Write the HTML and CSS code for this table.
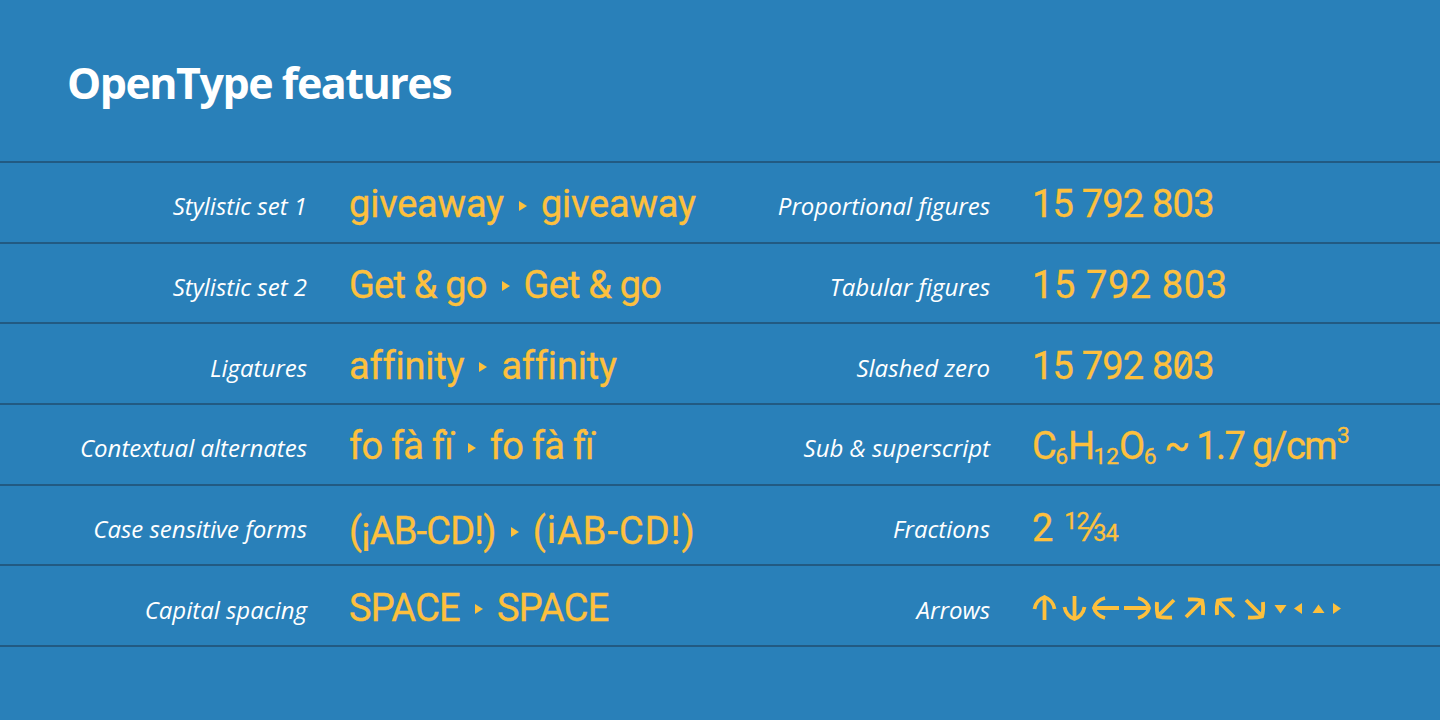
FILE: index.html
```html
<!DOCTYPE html>
<html lang="en">
<head>
<meta charset="utf-8">
<title>OpenType features</title>
<link rel="stylesheet" href="styles.css">
</head>
<body>
<main class="page">
  <header class="header">
    <h1 class="title">OpenType features</h1>
  </header>
  <section class="table">
    <div class="row">
      <div class="label">Stylistic set 1</div>
      <div class="sample"><span class="wide">giveaway</span><span class="tri"></span><span class="wide">giveaway</span></div>
      <div class="label">Proportional figures</div>
      <div class="sample">15 792 803</div>
    </div>
    <div class="row">
      <div class="label">Stylistic set 2</div>
      <div class="sample">Get &amp; go<span class="tri"></span>Get &amp; go</div>
      <div class="label">Tabular figures</div>
      <div class="sample tabular">15 792 803</div>
    </div>
    <div class="row">
      <div class="label">Ligatures</div>
      <div class="sample"><span class="noliga wide">affinity</span><span class="tri"></span><span class="wide">affinity</span></div>
      <div class="label">Slashed zero</div>
      <div class="sample">15 792 8<span class="zero">0</span>3</div>
    </div>
    <div class="row">
      <div class="label">Contextual alternates</div>
      <div class="sample">fo fà fï<span class="tri"></span>fo fà fï</div>
      <div class="label">Sub &amp; superscript</div>
      <div class="sample subsup">C<span class="sub">6</span>H<span class="sub">12</span>O<span class="sub">6</span> ~ 1.7 g/cm<span class="sup">3</span></div>
    </div>
    <div class="row">
      <div class="label">Case sensitive forms</div>
      <div class="sample">(¡AB-CD!)<span class="tri"></span><span class="casegrp">(<span class="case">¡</span>AB-CD!)</span></div>
      <div class="label">Fractions</div>
      <div class="sample">2 <span class="num">12</span><span class="fslash">⁄</span><span class="den">34</span></div>
    </div>
    <div class="row">
      <div class="label">Capital spacing</div>
      <div class="sample">SPACE<span class="tri"></span><span class="cpsp">SPACE</span></div>
      <div class="label">Arrows</div>
      <div class="sample arrows">
        <svg class="arr a-v" viewBox="0 0 25 26"><path d="M12.5 2V25M2.5 14C3.5 8 8 3.5 12.5 2C17 3.5 21.5 8 22.5 14"/></svg>
        <svg class="arr a-v" viewBox="0 0 25 26"><path d="M12.5 1V24M2.5 12C3.5 18 8 22.5 12.5 24C17 22.5 21.5 18 22.5 12"/></svg>
        <svg class="arr a-h" viewBox="0 0 28 26"><path d="M2 13H27M13 3C7 4.5 3 9 2 13C3 17 7 21.5 13 23"/></svg>
        <svg class="arr a-h" viewBox="0 0 28 26"><path d="M1 13H26M15 3C21 4.5 25 9 26 13C25 17 21 21.5 15 23"/></svg>
        <svg class="arr a-d" viewBox="0 0 22 26"><path d="M20 5L4 21M3 7C2.5 13 3 18 4 21.5C7.5 22.5 12 23 18 22.5"/></svg>
        <svg class="arr a-d" viewBox="0 0 22 26"><path d="M2 22L18 6M4 4.5C10 4 14.5 4.5 18 5.5C19 9 19.5 14 19 20"/></svg>
        <svg class="arr a-d" viewBox="0 0 22 26"><path d="M20 22L4 6M3 20C2.5 14 3 9 4 5.5C7.5 4.5 12 4 18 4.5"/></svg>
        <svg class="arr a-d" viewBox="0 0 22 26"><path d="M2 5L18 21M19 7C19.5 13 19 18 18 21.5C14.5 22.5 10 23 4 22.5"/></svg>
        <svg class="tri-ico t-down" viewBox="0 0 13 26"><polygon class="fill" points="0.5,10 12.5,10 6.5,18.5"/></svg>
        <svg class="tri-ico t-left" viewBox="0 0 10 26"><polygon class="fill" points="9,8 9,19 1,13.5"/></svg>
        <svg class="tri-ico t-up" viewBox="0 0 13 26"><polygon class="fill" points="0.5,18 12.5,18 6.5,9.5"/></svg>
        <svg class="tri-ico t-right" viewBox="0 0 10 26"><polygon class="fill" points="1,8 1,19 9,13.5"/></svg>
      </div>
    </div>
  </section>
</main>
</body>
</html>
```
FILE: styles.css
```css
* { box-sizing: border-box; }

html, body {
  margin: 0;
  padding: 0;
  background: #2980b9;
}

.page {
  width: 1440px;
  height: 720px;
  background: #2980b9;
  font-family: "Open Sans", "Noto Sans", sans-serif;
  overflow: hidden;
}

.header {
  height: 161px;
  padding: 54px 0 0 67px;
}

.title {
  margin: 0;
  font-size: 43px;
  font-weight: 700;
  color: #ffffff;
  line-height: 1.362;
  letter-spacing: -1.5px;
}

.row {
  display: grid;
  grid-template-columns: 307px 383px 300px 1fr;
  align-items: center;
  height: 80.7px;
  border-top: 2px solid #225a82;
  padding-top: 4px;
}

.row:last-child {
  border-bottom: 2px solid #225a82;
  height: 82.7px;
}

.label {
  text-align: right;
  color: #ffffff;
  font-style: italic;
  font-size: 24px;
  line-height: 30px;
  padding-top: 4px;
  white-space: nowrap;
}

.sample {
  padding-left: 42px;
  color: #fdc03d;
  font-family: Roboto, "Open Sans", sans-serif;
  font-size: 38px;
  font-weight: 400;
  line-height: 50px;
  white-space: nowrap;
  letter-spacing: -0.8px;
  -webkit-text-stroke: 0.35px #fdc03d;
}

.wide { letter-spacing: -0.2px; }

.tri {
  display: inline-block;
  width: 0;
  height: 0;
  border-top: 5.5px solid transparent;
  border-bottom: 5.5px solid transparent;
  border-left: 8px solid #fdc03d;
  margin: 0 14px 0 15px;
  vertical-align: 0.18em;
}

.noliga { font-variant-ligatures: none; }

.tabular { letter-spacing: 0.6px; }

.zero { position: relative; }
.zero::after {
  content: "";
  position: absolute;
  left: 50%;
  top: 0.56em;
  width: 3.2px;
  height: 0.46em;
  background: #fdc03d;
  transform: translate(-50%, -50%) rotate(30deg);
}

.subsup { letter-spacing: -1.6px; }

.sub {
  font-size: 0.6em;
  vertical-align: -0.22em;
  line-height: 0;
  letter-spacing: 0;
}

.sup {
  font-size: 0.6em;
  vertical-align: 0.7em;
  line-height: 0;
  margin-left: 1px;
}

.num {
  font-size: 0.62em;
  vertical-align: 0.5em;
  line-height: 0;
  margin-left: 3px;
}

.den {
  font-size: 0.62em;
  line-height: 0;
}

.fslash {
  font-family: "Open Sans", sans-serif;
  margin: 0;
}

.case {
  display: inline-block;
  vertical-align: 0.2em;
}

.casegrp { letter-spacing: 1px; }

.cpsp { letter-spacing: -0.6px; }

.arrows {
  display: flex;
  align-items: center;
  padding-top: 0;
  letter-spacing: 0;
}

.arr {
  height: 26px;
  fill: none;
  stroke: #fdc03d;
  stroke-width: 3.8;
  flex: none;
}

.a-v { width: 25px; margin-right: 5px; }
.a-h { width: 28px; margin-right: 3px; }
.a-d { width: 22px; margin-right: 8px; }

.tri-ico {
  height: 26px;
  flex: none;
}

.t-down { width: 13px; margin-right: 6px; }
.t-left { width: 10px; margin-right: 9px; }
.t-up { width: 13px; margin-right: 7px; }
.t-right { width: 10px; }

.fill { fill: #fdc03d; }
```
